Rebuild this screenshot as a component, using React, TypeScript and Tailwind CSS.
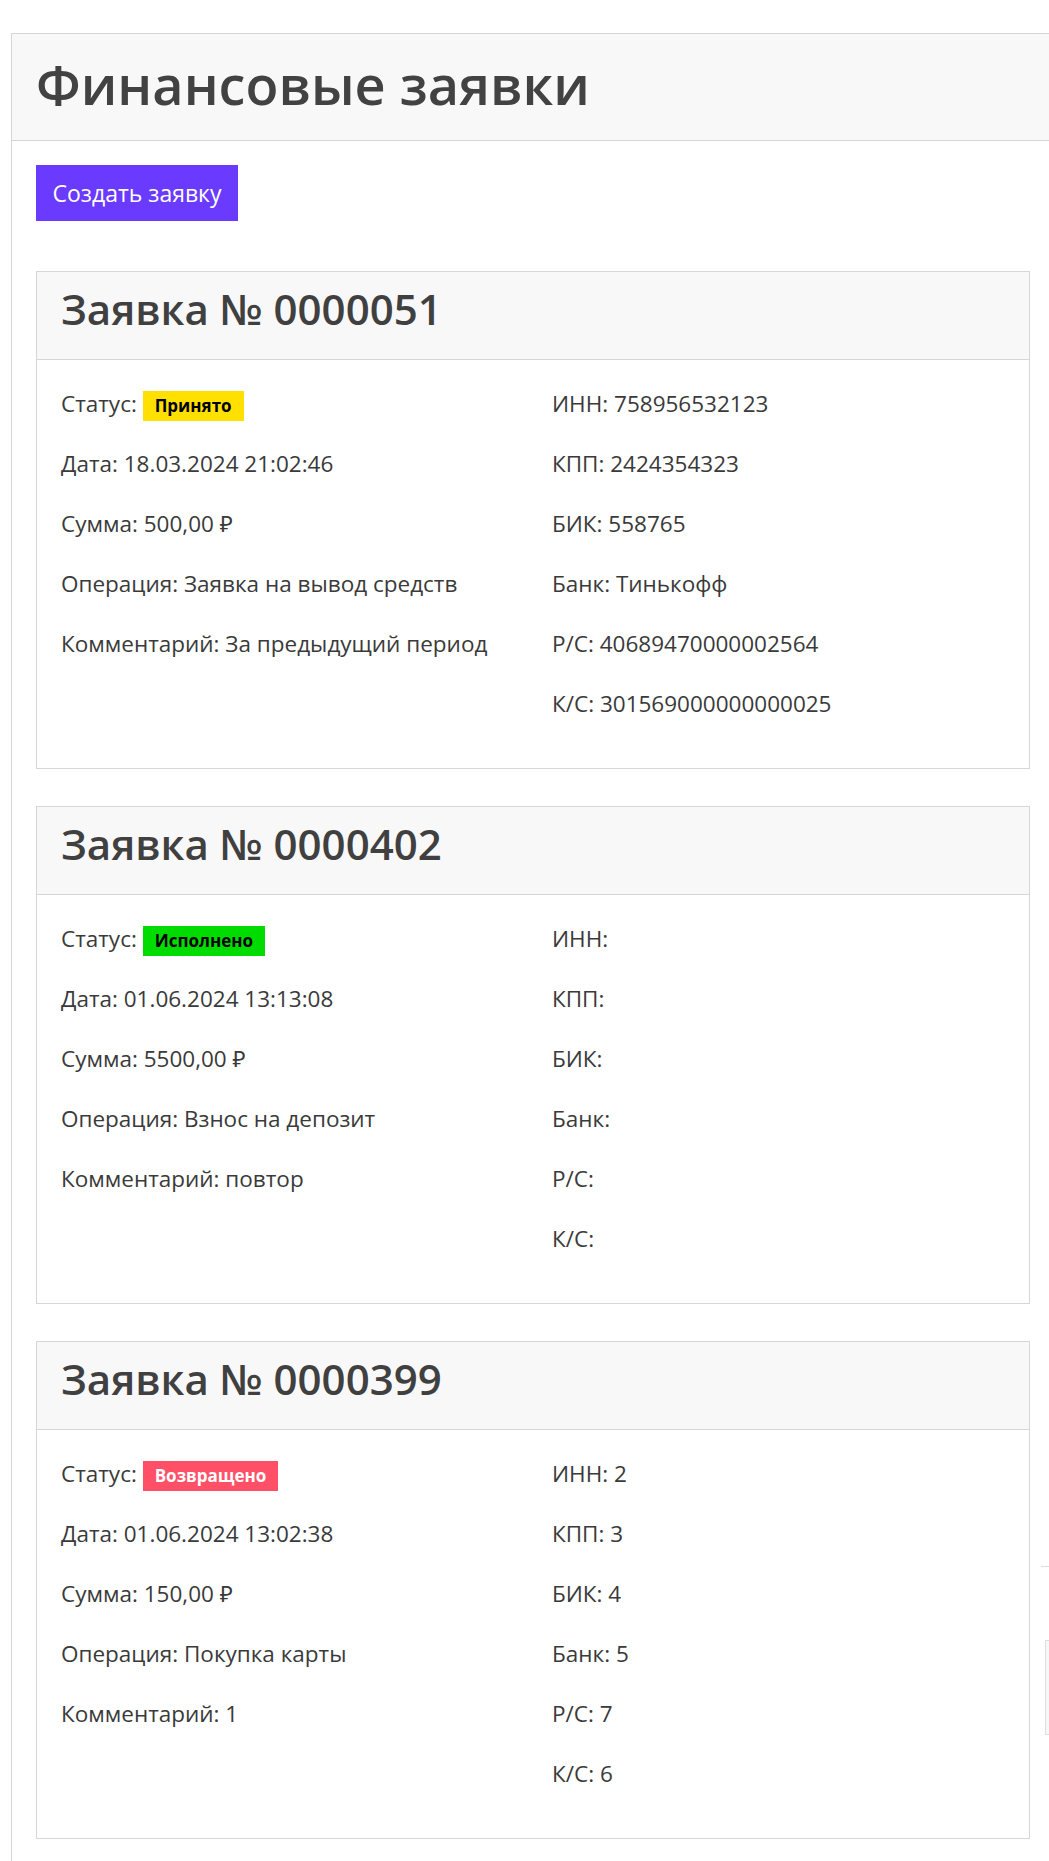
const FONT = "font-['Open_Sans','Noto_Sans',sans-serif]";

type Order = {
  number: string;
  status: { label: string; className: string };
  date: string;
  amount: string;
  operation: string;
  comment: string;
  inn: string;
  kpp: string;
  bik: string;
  bank: string;
  rs: string;
  ks: string;
};

const orders: Order[] = [
  {
    number: "0000051",
    status: { label: "Принято", className: "bg-[#ffe000] text-black" },
    date: "18.03.2024 21:02:46",
    amount: "500,00 ₽",
    operation: "Заявка на вывод средств",
    comment: "За предыдущий период",
    inn: "758956532123",
    kpp: "2424354323",
    bik: "558765",
    bank: "Тинькофф",
    rs: "40689470000002564",
    ks: "301569000000000025",
  },
  {
    number: "0000402",
    status: { label: "Исполнено", className: "bg-[#00dc00] text-black" },
    date: "01.06.2024 13:13:08",
    amount: "5500,00 ₽",
    operation: "Взнос на депозит",
    comment: "повтор",
    inn: "",
    kpp: "",
    bik: "",
    bank: "",
    rs: "",
    ks: "",
  },
  {
    number: "0000399",
    status: { label: "Возвращено", className: "bg-[#ff5068] text-white" },
    date: "01.06.2024 13:02:38",
    amount: "150,00 ₽",
    operation: "Покупка карты",
    comment: "1",
    inn: "2",
    kpp: "3",
    bik: "4",
    bank: "5",
    rs: "7",
    ks: "6",
  },
];

function Line({ children }: { children: React.ReactNode }) {
  return <p className="h-[60px] leading-[60px] whitespace-nowrap">{children}</p>;
}

function OrderCard({ order }: { order: Order }) {
  return (
    <div className="w-[994px] border border-[#d6d6d6] bg-white">
      <div className="h-[88px] border-b border-[#d6d6d6] bg-[#f8f8f8] pl-[24px] pt-[16px]">
        <h2 className="text-[42px] leading-none font-semibold text-[#404040]">Заявка № {order.number}</h2>
      </div>
      <div className="grid grid-cols-[491px_1fr] px-[24px] pt-[14px] pb-[34px] text-[22.5px] text-[#3a3a3a]">
        <div>
          <Line>
            Статус:{" "}
            <span className={`inline-block px-[12px] text-[17px] leading-[30px] font-bold ${order.status.className}`}>
              {order.status.label}
            </span>
          </Line>
          <Line>Дата: {order.date}</Line>
          <Line>Сумма: {order.amount}</Line>
          <Line>Операция: {order.operation}</Line>
          <Line>Комментарий: {order.comment}</Line>
        </div>
        <div>
          <Line>ИНН: {order.inn}</Line>
          <Line>КПП: {order.kpp}</Line>
          <Line>БИК: {order.bik}</Line>
          <Line>Банк: {order.bank}</Line>
          <Line>Р/С: {order.rs}</Line>
          <Line>К/С: {order.ks}</Line>
        </div>
      </div>
    </div>
  );
}

export default function App() {
  return (
    <div className={`relative min-h-[1861px] overflow-hidden bg-white pt-[33px] pl-[11px] ${FONT}`}>
      <div className="min-h-[1828px] border-t border-l border-[#d6d6d6]">
        <div className="h-[107px] border-b border-[#d6d6d6] bg-[#f8f8f8] pl-[24px] pt-[23px]">
          <h1 className="text-[54px] leading-none font-semibold text-[#424242]">Финансовые заявки</h1>
        </div>
        <div className="flex flex-col items-start gap-[37px] pl-[24px] pt-[24px]">
          <button
            type="button"
            className="mb-[13px] h-[56px] w-[202px] bg-[#6a3aff] text-[23px] text-white"
          >
            Создать заявку
          </button>
          {orders.map((o) => (
            <OrderCard key={o.number} order={o} />
          ))}
        </div>
      </div>
      {/* faint scroll-edge remnants at the right border */}
      <div className="absolute right-0 top-[1566px] h-px w-[8px] bg-[#dddddd]" />
      <div className="absolute right-0 top-[1640px] h-[95px] w-[4px] border-y border-l border-[#dddddd] bg-[#f7f7f7]" />
    </div>
  );
}
